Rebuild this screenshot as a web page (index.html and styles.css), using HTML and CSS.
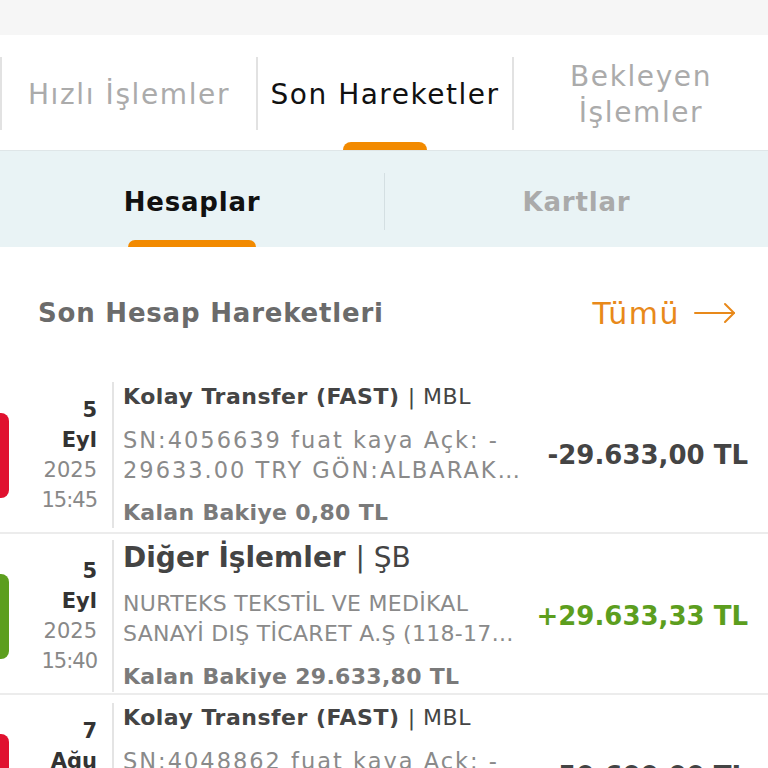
FILE: index.html
```html
<!DOCTYPE html>
<html lang="tr">
<head>
    <meta charset="UTF-8">
    <meta name="viewport" content="width=device-width, initial-scale=1.0">
    <title>Son Hareketler</title>
    <link rel="stylesheet" href="styles.css">
</head>
<body>
    <div class="status-strip"></div>

    <!-- Main tabs -->
    <div class="main-tabs">
        <div class="main-tab">
            <div class="main-tab-label">Hızlı İşlemler</div>
        </div>
        <div class="main-tab active">
            <div class="main-tab-label">Son Hareketler</div>
            <div class="main-tab-bar"></div>
        </div>
        <div class="main-tab">
            <div class="main-tab-label">Bekleyen<br>İşlemler</div>
        </div>
    </div>

    <!-- Sub tabs -->
    <div class="sub-tabs">
        <div class="sub-tab active">
            <div class="sub-tab-label">Hesaplar</div>
            <div class="sub-tab-bar"></div>
        </div>
        <div class="sub-tab">
            <div class="sub-tab-label">Kartlar</div>
        </div>
    </div>

    <div class="section-head">
        <span class="section-title">Son Hesap Hareketleri</span>
        <span class="see-all">Tümü
            <svg width="42" height="22" viewBox="0 0 42 22" fill="none" stroke="#e8891a" stroke-width="2" stroke-linecap="round" stroke-linejoin="round">
                <path d="M1 11h39"/>
                <path d="M31 2l9 9-9 9"/>
            </svg>
        </span>
    </div>

    <!-- Transactions -->
    <div class="tx">
        <div class="tx-mark out"></div>
        <div class="tx-date">
            <div class="day">5</div>
            <div class="month">Eyl</div>
            <div class="year">2025</div>
            <div class="time">15:45</div>
        </div>
        <div class="tx-body">
            <div class="tx-title">Kolay Transfer (FAST) <span class="channel">| MBL</span></div>
            <div class="tx-desc">
                <div>SN:4056639 fuat kaya Açk: -</div>
                <div>29633.00 TRY GÖN:ALBARAK…</div>
            </div>
            <div class="tx-balance">Kalan Bakiye <b>0,80 TL</b></div>
        </div>
        <div class="tx-amount">-29.633,00 TL</div>
    </div>

    <div class="tx second">
        <div class="tx-mark in"></div>
        <div class="tx-date">
            <div class="day">5</div>
            <div class="month">Eyl</div>
            <div class="year">2025</div>
            <div class="time">15:40</div>
        </div>
        <div class="tx-body">
            <div class="tx-title big">Diğer İşlemler <span class="channel">| ŞB</span></div>
            <div class="tx-desc tight">
                <div>NURTEKS TEKSTİL VE MEDİKAL</div>
                <div>SANAYİ DIŞ TİCARET A.Ş (118-17…</div>
            </div>
            <div class="tx-balance">Kalan Bakiye <b>29.633,80 TL</b></div>
        </div>
        <div class="tx-amount plus">+29.633,33 TL</div>
    </div>

    <div class="tx third">
        <div class="tx-mark out"></div>
        <div class="tx-date">
            <div class="day">7</div>
            <div class="month">Ağu</div>
            <div class="year">2025</div>
            <div class="time">10:12</div>
        </div>
        <div class="tx-body">
            <div class="tx-title">Kolay Transfer (FAST) <span class="channel">| MBL</span></div>
            <div class="tx-desc">
                <div>SN:4048862 fuat kaya Açk: -</div>
                <div>50600.00 TRY GÖN:ALBARAK…</div>
            </div>
            <div class="tx-balance">Kalan Bakiye <b>0,47 TL</b></div>
        </div>
        <div class="tx-amount">-50.600,00 TL</div>
    </div>
</body>
</html>
```

FILE: styles.css
```css
body {
    font-family: "DejaVu Sans", "Noto Sans", sans-serif;
    margin: 0;
    padding: 0;
    background-color: #fff;
    color: #444;
    width: 768px;
    overflow: hidden;
}
.status-strip {
    height: 35px;
    background-color: #f6f6f6;
}

/* main tabs */
.main-tabs {
    display: flex;
    height: 115px;
    border-bottom: 1px solid #dfe6e8;
}
.main-tab {
    width: 256px;
    display: flex;
    flex-direction: column;
    padding-top: 22px;
    box-sizing: border-box;
}
.main-tab-label {
    height: 73px;
    padding-top: 2px;
    box-sizing: border-box;
    border-left: 2px solid #e2e2e2;
    display: flex;
    align-items: center;
    justify-content: center;
    text-align: center;
    font-size: 28px;
    line-height: 36px;
    letter-spacing: 1.6px;
    color: #ababab;
}
.main-tab.active .main-tab-label {
    color: #111;
    letter-spacing: 1.5px;
}
.main-tab-bar {
    width: 84px;
    height: 8px;
    margin: 12px auto 0;
    border-radius: 8px 8px 0 0;
    background-color: #f28a00;
    position: relative;
    left: 1px;
}

/* sub tabs */
.sub-tabs {
    display: flex;
    height: 96px;
    background-color: #e9f3f5;
}
.sub-tab {
    width: 384px;
    display: flex;
    flex-direction: column;
    padding-top: 22px;
    box-sizing: border-box;
}
.sub-tab + .sub-tab .sub-tab-label {
    border-left: 1px solid #d4dfe2;
}
.sub-tab-label {
    height: 57px;
    padding-top: 1px;
    box-sizing: border-box;
    display: flex;
    align-items: center;
    justify-content: center;
    font-size: 26px;
    font-weight: 600;
    letter-spacing: 0.8px;
    color: #aaa;
}
.sub-tab.active .sub-tab-label {
    color: #111;
}
.sub-tab-bar {
    width: 128px;
    height: 7px;
    margin: 10px 0 0 128px;
    border-radius: 7px 7px 0 0;
    background-color: #f28a00;
}

/* section header */
.section-head {
    height: 132px;
    display: flex;
    align-items: center;
    justify-content: space-between;
    padding: 0 32px 0 38px;
}
.section-title {
    font-size: 26px;
    font-weight: 600;
    letter-spacing: 0.8px;
    color: #6b6b6b;
}
.see-all {
    display: flex;
    align-items: center;
    gap: 14px;
    font-size: 30px;
    letter-spacing: 1.5px;
    color: #e8891a;
}

/* transactions */
.tx {
    display: flex;
    align-items: center;
    border-bottom: 2px solid #ececec;
    padding: 3px 20px 4px 0;
}
.tx.second {
    padding-top: 6px;
    padding-bottom: 1px;
}
.tx.third {
    padding-top: 8px;
}
.tx-mark {
    width: 9px;
    height: 85px;
    border-radius: 0 8px 8px 0;
    flex-shrink: 0;
}
.tx-mark.out {
    background-color: #e0112f;
}
.tx-mark.in {
    background-color: #5c9e1e;
}
.tx-date {
    width: 88px;
    text-align: right;
    font-size: 21px;
    line-height: 30px;
    color: #888;
    flex-shrink: 0;
}
.tx-date .day,
.tx-date .month {
    color: #333;
    font-weight: 600;
}
.tx-date .time {
    letter-spacing: -1px;
}
.tx-body {
    width: 395px;
    margin-left: 15px;
    padding-left: 9px;
    border-left: 2px solid #e4e4e4;
    flex-shrink: 0;
}
.tx-title {
    font-size: 22px;
    line-height: 30px;
    font-weight: 600;
    letter-spacing: 0.5px;
    color: #444;
    white-space: nowrap;
}
.tx-title.big {
    font-size: 28px;
    line-height: 36px;
    letter-spacing: 0;
}
.tx-title .channel {
    font-weight: 400;
}
.tx-desc {
    margin-top: 13px;
    font-size: 22.5px;
    line-height: 30px;
    letter-spacing: 2px;
    color: #8a8a8a;
    white-space: nowrap;
}
.tx-desc.tight {
    font-size: 22px;
    letter-spacing: 0.3px;
}
.tx-balance {
    margin-top: 13px;
    font-size: 22px;
    line-height: 30px;
    font-weight: 600;
    letter-spacing: 0.3px;
    color: #7a7a7a;
}
.tx-balance b {
    font-weight: 700;
}
.tx-amount {
    margin-left: auto;
    font-size: 26px;
    font-weight: 700;
    color: #444;
    white-space: nowrap;
}
.tx-amount.plus {
    color: #5c9e1e;
}
```
